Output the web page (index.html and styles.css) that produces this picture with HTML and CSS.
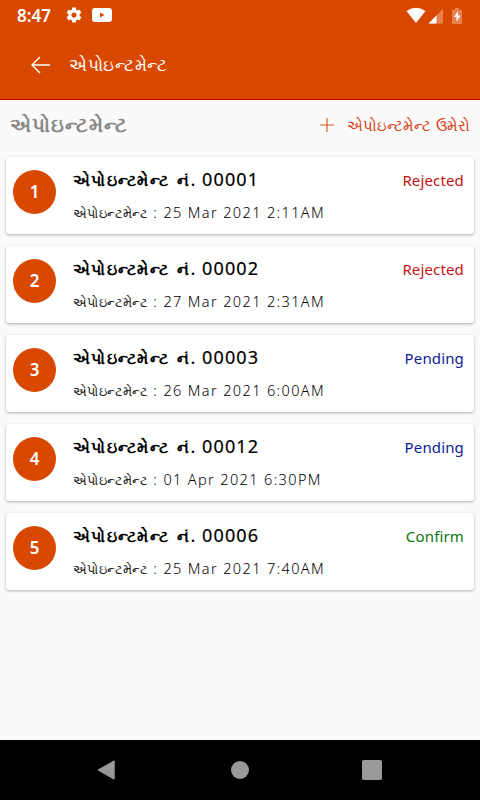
FILE: index.html
```html
<!DOCTYPE html>
<html lang="gu">
<head>
<meta charset="utf-8">
<title>એપોઇન્ટમેન્ટ</title>
<link rel="stylesheet" href="styles.css">
</head>
<body>
<header class="top">
  <div class="status">
    <span class="time">8:47</span>
    <svg class="gear" width="18" height="18" viewBox="0 0 24 24"><path fill="#fff" d="M19.43 12.98c.04-.32.07-.64.07-.98s-.03-.66-.07-.98l2.11-1.65c.19-.15.24-.42.12-.64l-2-3.46c-.12-.22-.39-.3-.61-.22l-2.49 1c-.52-.4-1.08-.73-1.69-.98l-.38-2.65C14.46 2.18 14.25 2 14 2h-4c-.25 0-.46.18-.49.42l-.38 2.65c-.61.25-1.17.59-1.69.98l-2.49-1c-.23-.09-.49 0-.61.22l-2 3.46c-.13.22-.07.49.12.64l2.11 1.65c-.04.32-.07.65-.07.98s.03.66.07.98l-2.11 1.65c-.19.15-.24.42-.12.64l2 3.46c.12.22.39.3.61.22l2.49-1c.52.4 1.08.73 1.69.98l.38 2.65c.03.24.24.42.49.42h4c.25 0 .46-.18.49-.42l.38-2.65c.61-.25 1.17-.59 1.69-.98l2.49 1c.23.09.49 0 .61-.22l2-3.46c.12-.22.07-.49-.12-.64l-2.11-1.65zM12 15.5c-1.93 0-3.5-1.57-3.5-3.5s1.57-3.5 3.5-3.5 3.500 1.570 3.500 3.500-1.570 3.500-3.500 3.500z"/></svg>
    <svg class="video" width="20" height="14" viewBox="0 0 20 14"><rect width="20" height="14" rx="3" fill="#fff"/><path d="M8 4.500l4.500 2.500-4.500 2.500z" fill="#d94800"/></svg>
    <svg class="signals" width="60" height="20" viewBox="0 0 60 20">
      <path d="M.5 5Q10-1.500 19.500 5L10 17z" fill="#fff"/>
      <path d="M22.500 17.500L37 3v14.500z" fill="#e98050"/><path d="M22.500 17.500L30.500 9.500v8z" fill="#fff"/>
      <path d="M46 4h3V2h4v2h3v14H46z" fill="#e98050"/><path d="M52 5l-4 6h2.500v4.500l4-6h-2.500z" fill="#fff"/>
    </svg>
  </div>
  <div class="bar">
    <svg class="back" width="20" height="18" viewBox="0 0 20 18"><path d="M9 1L1 9l8 8M1 9h18" fill="none" stroke="#fff" stroke-width="1.400"/></svg>
    <h1>એપોઇન્ટમેન્ટ</h1>
  </div>
</header>
<main>
  <div class="heading">
    <h2>એપોઇન્ટમેન્ટ</h2>
    <div class="add">
      <svg width="14" height="14" viewBox="0 0 14 14"><path d="M7 0v14M0 7h14" stroke="#e05a20" stroke-width="1.200"/></svg>
      <span>એપોઇન્ટમેન્ટ ઉમેરો</span>
    </div>
  </div>
  <ul class="list">
    <li class="card"><b class="num">1</b><div class="info"><p class="title"><b>એપોઇન્ટમેન્ટ નં.</b> <span>00001</span></p><p class="date"><i>એપોઇન્ટમેન્ટ</i> <span>: 25 Mar 2021 2:11AM</span></p></div><span class="state rejected">Rejected</span></li>
    <li class="card"><b class="num">2</b><div class="info"><p class="title"><b>એપોઇન્ટમેન્ટ નં.</b> <span>00002</span></p><p class="date"><i>એપોઇન્ટમેન્ટ</i> <span>: 27 Mar 2021 2:31AM</span></p></div><span class="state rejected">Rejected</span></li>
    <li class="card"><b class="num">3</b><div class="info"><p class="title"><b>એપોઇન્ટમેન્ટ નં.</b> <span>00003</span></p><p class="date"><i>એપોઇન્ટમેન્ટ</i> <span>: 26 Mar 2021 6:00AM</span></p></div><span class="state pending">Pending</span></li>
    <li class="card"><b class="num">4</b><div class="info"><p class="title"><b>એપોઇન્ટમેન્ટ નં.</b> <span>00012</span></p><p class="date"><i>એપોઇન્ટમેન્ટ</i> <span>: 01 Apr 2021 6:30PM</span></p></div><span class="state pending">Pending</span></li>
    <li class="card"><b class="num">5</b><div class="info"><p class="title"><b>એપોઇન્ટમેન્ટ નં.</b> <span>00006</span></p><p class="date"><i>એપોઇન્ટમેન્ટ</i> <span>: 25 Mar 2021 7:40AM</span></p></div><span class="state confirm">Confirm</span></li>
  </ul>
</main>
<nav class="nav">
  <svg width="20" height="20" viewBox="0 0 20 20"><path d="M17.200 .8v18.400L1 10z" fill="#999" stroke="#999" stroke-linejoin="round"/></svg>
  <svg width="20" height="20" viewBox="0 0 20 20"><circle cx="10" cy="10" r="9" fill="#999"/></svg>
  <svg width="20" height="20" viewBox="0 0 20 20"><rect width="20" height="20" rx="2" fill="#999"/></svg>
</nav>
</body>
</html>
```
FILE: styles.css
```css
* { box-sizing: border-box; margin: 0; padding: 0; }
body { width: 480px; height: 800px; display: flex; flex-direction: column; overflow: hidden; background: #fafafa; color: #000; font-family: "Noto Sans", sans-serif; white-space: nowrap; }
.top { height: 100px; background: #d94800; color: #fff; border-bottom: 1px solid #d50000; }
.status { height: 30px; display: flex; align-items: center; padding: 0 7px 0 17px; }
.time { font: 600 17px/32px "Noto Sans", sans-serif; width: 48px; padding-top: 1px; }
.gear { margin-right: 9px; }
.status svg { flex: none; }
.signals { margin: 1px 7px 0 auto; }
.bar { height: 69px; display: flex; align-items: center; padding-left: 31px; }
.bar h1 { font-size: 17px; font-weight: 400; letter-spacing: .5px; margin-left: 18px; }
main { flex: 1; }
.heading { height: 57px; display: flex; align-items: center; justify-content: space-between; padding: 0 10px 8px; }
.heading h2 { font-size: 20px; font-weight: 600; letter-spacing: 1px; color: #888; }
.add { display: flex; align-items: center; gap: 13px; color: #d94010; font-size: 14.500px; letter-spacing: -.15px; word-spacing: 2px; }
.list { list-style: none; display: flex; flex-direction: column; gap: 11.900px; padding: 0 6px; }
.card { height: 77px; background: #fff; border-radius: 3px; box-shadow: 0 1px 3px rgba(0,0,0,.3); display: flex; align-items: flex-start; padding: 0 10px 0 7px; }
.num { width: 43px; height: 44px; margin-top: 13px; border-radius: 50%; background: #d94800; color: #fff; font-weight: 600; font-size: 17px; line-height: 43px; text-align: center; }
.info { flex: 1; padding: 7px 0 0 17px; }
.title { height: 32px; line-height: 31px; font-size: 18px; font-weight: 400; letter-spacing: 1.100px; }
.title span { -webkit-text-stroke: .2px #000; }
.title b { font-size: 16px; font-weight: 600; letter-spacing: 1.250px; word-spacing: 3px; }
.date { height: 32px; line-height: 32px; font-size: 14.500px; font-weight: 300; letter-spacing: 1.370px; color: #000; }
.date i { font-style: normal; font-size: 13px; letter-spacing: .4px; color: #222; }
.state { font-size: 15px; line-height: 24px; letter-spacing: .15px; margin-top: 11px; }
.rejected { color: #c41212; }
.pending { color: #101c90; }
.confirm { color: #0c7414; }
.nav { height: 60px; background: #000; display: flex; align-items: center; justify-content: space-between; padding: 0 98px 0 97px; }
```
